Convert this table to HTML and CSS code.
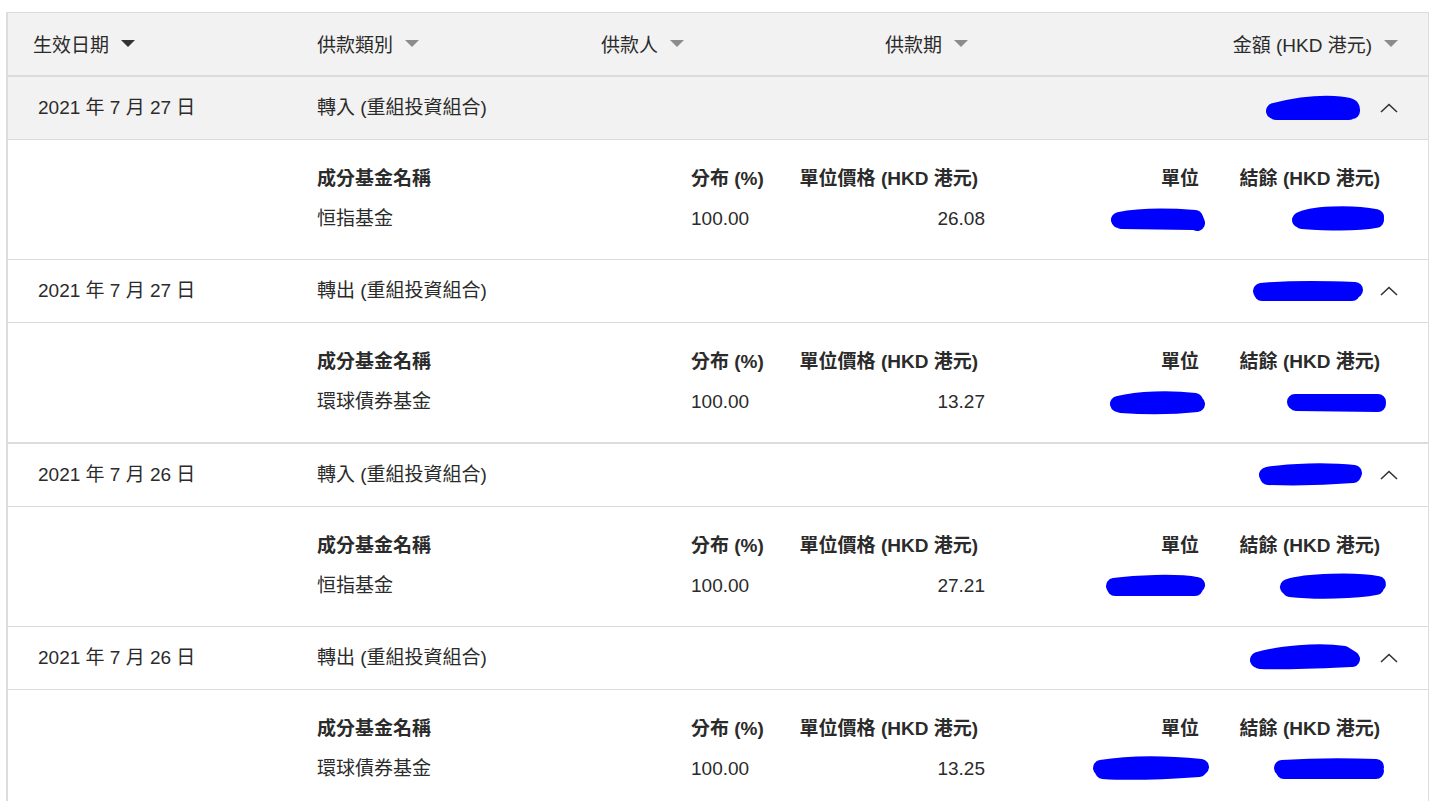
FILE: index.html
```html
<!DOCTYPE html>
<html lang="zh-Hant">
<head>
<meta charset="utf-8">
<title>供款記錄</title>
<link rel="stylesheet" href="styles.css">
</head>
<body>
<div class="table">
  <div class="thead">
    <div class="th"><span>生效日期</span><svg class="sort dark" width="14" height="8" viewBox="0 0 14 8"><polygon points="0,0 14,0 7,7"/></svg></div>
    <div class="th"><span>供款類別</span><svg class="sort" width="14" height="8" viewBox="0 0 14 8"><polygon points="0,0 14,0 7,7"/></svg></div>
    <div class="th"><span>供款人</span><svg class="sort" width="14" height="8" viewBox="0 0 14 8"><polygon points="0,0 14,0 7,7"/></svg></div>
    <div class="th"><span>供款期</span><svg class="sort" width="14" height="8" viewBox="0 0 14 8"><polygon points="0,0 14,0 7,7"/></svg></div>
    <div class="th right"><span>金額 (HKD 港元)</span><svg class="sort" width="14" height="8" viewBox="0 0 14 8"><polygon points="0,0 14,0 7,7"/></svg></div>
  </div>

  <div class="row shaded">
    <div class="td date">2021 年 7 月 27 日</div>
    <div class="td">轉入 (重組投資組合)</div>
    <div class="td"></div>
    <div class="td"></div>
    <div class="td right">
      <svg class="scribble" width="100" height="28" viewBox="0 0 100 28"><path d="M10 17 C 30 12, 50 9, 70 10 S 88 14, 88 17 M12 18 L 85 18"/></svg>
      <svg class="chev" width="18" height="10" viewBox="0 0 18 10"><path d="M1 9 L9 1.5 L17 9"/></svg>
    </div>
  </div>
  <div class="detail">
    <div class="dh">成分基金名稱</div>
    <div class="dh">分布 (%)</div>
    <div class="dh r pr">單位價格 (HKD 港元)</div>
    <div class="dh r">單位</div>
    <div class="dh r">結餘 (HKD 港元)</div>
    <div class="dv">恒指基金</div>
    <div class="dv">100.00</div>
    <div class="dv r">26.08</div>
    <div class="dv r"><svg class="scribble out" width="98" height="26" viewBox="0 0 98 26"><path d="M10 14 C 30 10, 60 10, 86 12 L 88 17 M12 15 L 84 16"/></svg></div>
    <div class="dv r"><svg class="scribble out" width="98" height="30" viewBox="0 0 98 30"><path d="M10 16 C 20 10, 60 8, 86 13 M 12 17 C 40 19, 70 19, 86 16"/></svg></div>
  </div>

  <div class="row">
    <div class="td date">2021 年 7 月 27 日</div>
    <div class="td">轉出 (重組投資組合)</div>
    <div class="td"></div>
    <div class="td"></div>
    <div class="td right">
      <svg class="scribble" width="112" height="24" viewBox="0 0 112 24"><path d="M9 12 C 40 9, 80 10, 103 11 M 10 14 L 100 14"/></svg>
      <svg class="chev" width="18" height="10" viewBox="0 0 18 10"><path d="M1 9 L9 1.5 L17 9"/></svg>
    </div>
  </div>
  <div class="detail">
    <div class="dh">成分基金名稱</div>
    <div class="dh">分布 (%)</div>
    <div class="dh r pr">單位價格 (HKD 港元)</div>
    <div class="dh r">單位</div>
    <div class="dh r">結餘 (HKD 港元)</div>
    <div class="dv">環球債券基金</div>
    <div class="dv">100.00</div>
    <div class="dv r">13.27</div>
    <div class="dv r"><svg class="scribble out" width="98" height="26" viewBox="0 0 98 26"><path d="M9 15 C 30 10, 60 9, 86 12 M 12 16 C 40 18, 70 17, 88 15"/></svg></div>
    <div class="dv r"><svg class="scribble out" width="102" height="24" viewBox="0 0 102 24"><path d="M9 12 L 92 12 M 10 13 L 92 14"/></svg></div>
  </div>

  <div class="row thick">
    <div class="td date">2021 年 7 月 26 日</div>
    <div class="td">轉入 (重組投資組合)</div>
    <div class="td"></div>
    <div class="td"></div>
    <div class="td right">
      <svg class="scribble" width="106" height="26" viewBox="0 0 106 26"><path d="M9 13 C 30 9, 70 8, 96 11 M 10 15 C 40 16, 70 15, 95 13"/></svg>
      <svg class="chev" width="18" height="10" viewBox="0 0 18 10"><path d="M1 9 L9 1.5 L17 9"/></svg>
    </div>
  </div>
  <div class="detail">
    <div class="dh">成分基金名稱</div>
    <div class="dh">分布 (%)</div>
    <div class="dh r pr">單位價格 (HKD 港元)</div>
    <div class="dh r">單位</div>
    <div class="dh r">結餘 (HKD 港元)</div>
    <div class="dv">恒指基金</div>
    <div class="dv">100.00</div>
    <div class="dv r">27.21</div>
    <div class="dv r"><svg class="scribble out" width="102" height="26" viewBox="0 0 102 26"><path d="M9 13 C 30 10, 70 8, 92 12 M 10 15 L 90 15"/></svg></div>
    <div class="dv r"><svg class="scribble out" width="112" height="28" viewBox="0 0 112 28"><path d="M12 15 C 30 9, 80 8, 102 12 M 14 17 C 40 20, 80 19, 100 15"/></svg></div>
  </div>

  <div class="row">
    <div class="td date">2021 年 7 月 26 日</div>
    <div class="td">轉出 (重組投資組合)</div>
    <div class="td"></div>
    <div class="td"></div>
    <div class="td right">
      <svg class="scribble" width="116" height="28" viewBox="0 0 116 28"><path d="M10 16 C 30 10, 70 6, 96 10 L 104 15 M 12 17 C 40 18, 80 16, 102 15"/></svg>
      <svg class="chev" width="18" height="10" viewBox="0 0 18 10"><path d="M1 9 L9 1.5 L17 9"/></svg>
    </div>
  </div>
  <div class="detail">
    <div class="dh">成分基金名稱</div>
    <div class="dh">分布 (%)</div>
    <div class="dh r pr">單位價格 (HKD 港元)</div>
    <div class="dh r">單位</div>
    <div class="dh r">結餘 (HKD 港元)</div>
    <div class="dv">環球債券基金</div>
    <div class="dv">100.00</div>
    <div class="dv r">13.25</div>
    <div class="dv r"><svg class="scribble out wide" width="122" height="28" viewBox="0 0 122 28"><path d="M10 13 C 40 8, 80 9, 110 12 M 12 16 C 40 18, 80 16, 108 14"/></svg></div>
    <div class="dv r"><svg class="scribble out" width="116" height="26" viewBox="0 0 116 26"><path d="M10 12 C 40 10, 80 10, 104 11 M 12 15 L 104 15"/></svg></div>
  </div>
</div>
</body>
</html>
```

FILE: styles.css
```css
* { box-sizing: border-box; }

body {
  margin: 0;
  background: #ffffff;
  font-family: "Liberation Sans", "Noto Sans CJK TC", Arial, sans-serif;
  font-size: 19px;
  color: #2b2b2b;
}

.table {
  margin: 12px 7px 0 6px;
  border-top: 1px solid #dcdcdc;
  border-left: 2px solid #dcdcdc;
  border-right: 1px solid #dcdcdc;
  overflow: hidden;
}

.thead, .row {
  display: grid;
  grid-template-columns: repeat(5, 1fr);
  height: 63px;
}

.thead {
  background: #f2f2f2;
  border-bottom: 2px solid #dcdcdc;
  height: 64px;
}

.row {
  border-bottom: 1px solid #dcdcdc;
}

.row.thick {
  border-top: 1px solid #dcdcdc;
  height: 64px;
}

.row.shaded { background: #f2f2f2; }

.th, .td {
  display: flex;
  align-items: center;
  padding: 0 25px 2px;
  white-space: nowrap;
}

.td { padding-bottom: 5px; }

.th { gap: 12px; }

.th.right, .td.right {
  justify-content: flex-end;
  padding-right: 30px;
}

.td.right { padding-bottom: 1px; gap: 16px; }

.td.date { padding-left: 30px; }

.sort { fill: #8c8c8c; margin-top: 2px; }
.sort.dark { fill: #333333; }

.chev path {
  fill: none;
  stroke: #333333;
  stroke-width: 1.6;
}

.scribble path {
  fill: none;
  stroke: #0000ff;
  stroke-width: 16;
  stroke-linecap: round;
  stroke-linejoin: round;
}

.scribble { display: block; }
.scribble.out { margin-right: -8px; }
.scribble.out.wide { margin-right: -14px; }

.detail {
  display: grid;
  grid-template-columns: 374px 100px 194px 214px 1fr;
  grid-template-rows: 24px 24px;
  row-gap: 16px;
  padding: 27px 48px 28px 309px;
  border-bottom: 1px solid #dcdcdc;
  height: 120px;
  align-items: center;
}

.dh {
  font-weight: bold;
  white-space: nowrap;
  line-height: 24px;
}

.dv {
  white-space: nowrap;
  line-height: 24px;
  display: flex;
  align-items: center;
}

.r { text-align: right; justify-content: flex-end; }
.pr { padding-right: 7px; }
```
